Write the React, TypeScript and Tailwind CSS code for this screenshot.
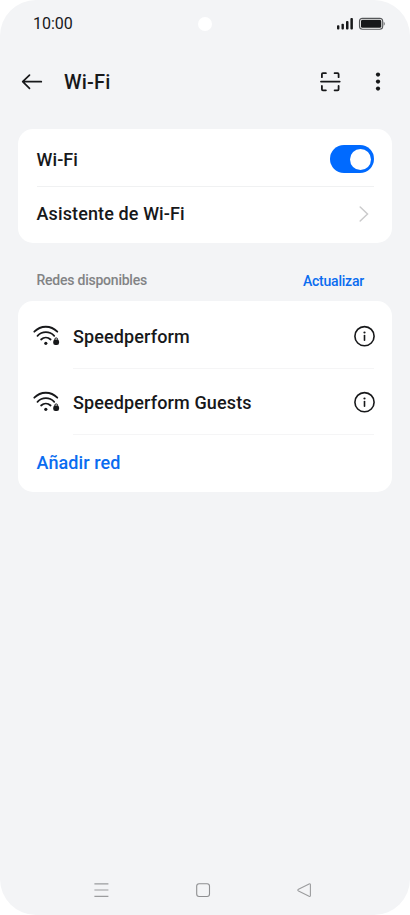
import type { ReactNode } from "react";

function StatusBar() {
  return (
    <header className="relative flex h-12 items-center justify-between pl-[33px] pr-[25px]">
      <span className="text-base leading-none">10:00</span>
      <span className="absolute left-[198px] top-[17px] size-[14px] rounded-full bg-white" />
      <svg width="49" height="14" viewBox="0 0 49 14" fill="#17181a">
        <rect x="1" y="8.2" width="2.4" height="4.3" rx="0.9" />
        <rect x="5.5" y="6.7" width="2.4" height="5.8" rx="0.9" />
        <rect x="10" y="4" width="2.5" height="8.5" rx="0.9" />
        <rect x="14.4" y="1" width="2.5" height="11.5" rx="0.9" />
        <rect x="23.5" y="1.4" width="23.2" height="10.8" rx="3" fill="#fff" stroke="#55575a" strokeWidth="1.1" />
        <rect x="24.9" y="2.8" width="20.4" height="8" rx="1.6" />
        <path d="M47.6 4.8q1.3.4 1.3 2t-1.3 2z" fill="#77797c" />
      </svg>
    </header>
  );
}

function TopBar() {
  return (
    <div className="flex h-[68px] items-center pl-[21px] pr-[29px]">
      <svg width="22" height="18" viewBox="0 0 22 18" fill="none" stroke="#17181a" strokeWidth="1.7" strokeLinecap="round" strokeLinejoin="round">
        <path d="M20.3 8.7H2M8.5 2.1 1.7 8.7l6.8 6.6" />
      </svg>
      <h1 className="ml-[21px] text-[20px] font-medium leading-6 tracking-[0.2px]">Wi-Fi</h1>
      <svg className="ml-auto" width="22" height="20" viewBox="0 0 22 20" fill="none" stroke="#17181a" strokeWidth="1.8" strokeLinecap="round" strokeLinejoin="round">
        <path d="M2.9 5.2V2.2q0-1 1-1h3M15.6 1.2h3q1 0 1 1v3M2.9 14v3.3q0 1 1 1h3M15.6 18.3h3q1 0 1-1V14M2 9.6h18.7" />
      </svg>
      <svg className="ml-[34px]" width="6" height="20" viewBox="0 0 6 20" fill="#17181a">
        <circle cx="3" cy="2.6" r="2.1" />
        <circle cx="3" cy="9.6" r="2.1" />
        <circle cx="3" cy="16.6" r="2.1" />
      </svg>
    </div>
  );
}

function Card({ children }: { children: ReactNode }) {
  return <section className="mx-[18px] rounded-[15px] bg-white pl-[18.5px] pr-[18px]">{children}</section>;
}

function WifiIcon() {
  return (
    <svg className="-ml-[3.5px] shrink-0" width="27" height="22" viewBox="0 0 27 22" fill="none" stroke="#17181a" strokeWidth="1.8" strokeLinecap="round">
      <path d="M1.3 6.7C7.7.1 17.9.1 24.3 6.7M4.5 10.8c4.7-4.8 12-4.8 16.7 0M8.1 14.5c2.8-2.6 6.7-2.6 9.5 0" />
      <circle cx="12.8" cy="18.3" r="1.6" fill="#17181a" stroke="none" />
      <rect x="20.2" y="14.5" width="5.9" height="5.5" rx="2.2" fill="#17181a" stroke="none" />
      <path d="M21.8 15.2v-.9a1.4 1.4 0 0 1 2.8 0v.9" strokeWidth="1" />
    </svg>
  );
}

function NetworkRow({ name }: { name: string }) {
  return (
    <div className="flex h-[66px] items-center">
      <WifiIcon />
      <div className="ml-[13px] flex h-full flex-1 items-center justify-between border-b border-[#f5f5f6] pt-0.5">
        <span className="text-[18px] font-medium leading-6 tracking-[0.13px]">{name}</span>
        <svg className="-mr-[2px]" width="23" height="23" viewBox="0 0 23 23" fill="none" stroke="#17181a">
          <circle cx="11.5" cy="11.2" r="9.6" strokeWidth="1.6" />
          <circle cx="11.5" cy="7.5" r="1.1" fill="#17181a" stroke="none" />
          <path d="M11.5 10.6v4.6" strokeWidth="1.6" strokeLinecap="round" />
        </svg>
      </div>
    </div>
  );
}

function NavBar() {
  return (
    <nav className="mt-auto flex h-[50px] items-center justify-between pl-[94px] pr-[98px]">
      <svg width="15" height="15" viewBox="0 0 15 15" stroke="#9b9c9e" strokeWidth="1.2">
        <path d="M.4 .9h14M.4 7h14M.4 13.3h14" />
      </svg>
      <svg width="15" height="15" viewBox="0 0 15 15" fill="none" stroke="#8e8f91" strokeWidth="1.1">
        <rect x="0.7" y="0.7" width="12.8" height="12.8" rx="2.4" />
      </svg>
      <svg width="15" height="15" viewBox="0 0 15 15" fill="none" stroke="#9b9c9e" strokeWidth="1.1" strokeLinejoin="round">
        <path d="M1.5 6.2 12.1.9q1.3-.5 1.3.9v10.7q0 1.4-1.3.8L1.5 8q-1.5-.9 0-1.8z" />
      </svg>
    </nav>
  );
}

export default function App() {
  return (
    <div className="h-[915px] w-[410px] bg-white">
      <main className="flex h-full flex-col rounded-[36px] bg-[#f3f4f6] font-[Roboto,sans-serif] text-[#17181a]">
        <StatusBar />
        <TopBar />
        <div className="h-[13px]" />
        <Card>
          <div className="flex h-[58px] items-center justify-between border-b border-[#f0f1f2] pt-[3px]">
            <span className="pt-0.5 text-[18px] font-medium leading-6 tracking-[0.1px]">Wi-Fi</span>
            <span className="flex h-7 w-11 items-center justify-end rounded-full bg-[#006aff] pr-[3.5px]">
              <span className="size-[21px] rounded-full bg-white" />
            </span>
          </div>
          <div className="flex h-14 items-center justify-between pb-[2px]">
            <span className="text-[18px] font-medium leading-6 tracking-[0.12px]">Asistente de Wi-Fi</span>
            <svg className="mr-[5px]" width="10" height="17" viewBox="0 0 10 17" fill="none" stroke="#cbcbcc" strokeWidth="1.5" strokeLinecap="round">
              <path d="m1.2 1 7.3 7-7.3 7" />
            </svg>
          </div>
        </Card>
        <div className="flex h-[57.5px] items-center justify-between pl-[36.5px] pr-[46px] pt-[17px]">
          <h2 className="text-[14px] font-medium leading-5 tracking-[-0.23px] text-[#828385]">Redes disponibles</h2>
          <button className="pt-0.5 text-[14px] font-medium leading-5 tracking-[-0.22px] text-[#0a6cf0]">Actualizar</button>
        </div>
        <Card>
          <div className="pt-[2.5px]">
            <NetworkRow name="Speedperform" />
            <NetworkRow name="Speedperform Guests" />
          </div>
          <div className="flex h-[56.5px] items-center">
            <button className="text-[18px] font-medium leading-6 tracking-[0.1px] text-[#0a6cf0]">Añadir red</button>
          </div>
        </Card>
        <NavBar />
      </main>
    </div>
  );
}
